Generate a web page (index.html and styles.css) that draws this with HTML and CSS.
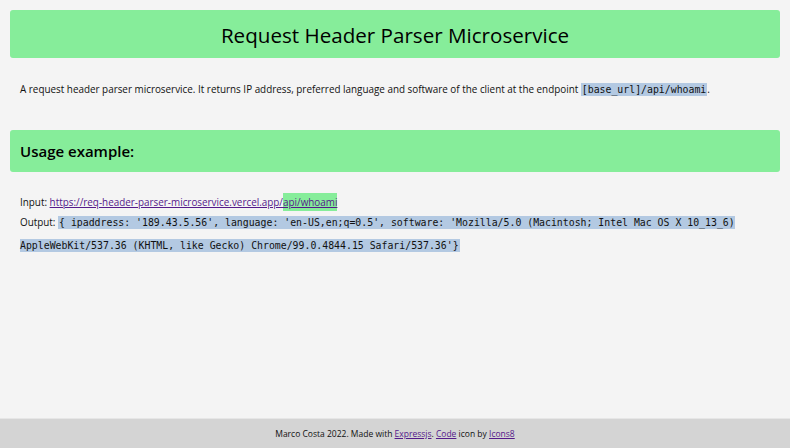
FILE: index.html
```html
<!DOCTYPE html>
<html lang="en">
<head>
<meta charset="utf-8">
<title>Request Header Parser Microservice</title>
<link rel="stylesheet" href="styles.css">
</head>
<body>
<div class="page">
  <header class="banner">
    <h1 class="title">Request Header Parser Microservice</h1>
  </header>
  <p class="intro">A request header parser microservice. It returns IP address, preferred language and software of the client at the endpoint <code class="code">[base_url]/api/whoami</code>.</p>
  <section class="usage">
    <div class="subbanner"><h2 class="subtitle">Usage example:</h2></div>
    <p class="line first">Input: <a class="link" href="#">https://req-header-parser-microservice.vercel.app/<span class="hl">api/whoami</span></a></p>
    <p class="line out">Output: <code class="code">{ ipaddress: '189.43.5.56', language: 'en-US,en;q=0.5', software: 'Mozilla/5.0 (Macintosh; Intel Mac OS X 10_13_6) AppleWebKit/537.36 (KHTML, like Gecko) Chrome/99.0.4844.15 Safari/537.36'}</code></p>
  </section>
</div>
<footer class="footer"><p class="credits">Marco Costa 2022. Made with <a class="link" href="#">Expressjs</a>. <a class="link" href="#">Code</a> icon by <a class="link" href="#">Icons8</a></p></footer>
</body>
</html>
```

FILE: styles.css
```css
html, body {
  margin: 0;
  padding: 0;
  height: 100%;
}
body {
  background: #f4f4f4;
  font-family: "Open Sans", "Liberation Sans", sans-serif;
  color: #111;
  display: flex;
  flex-direction: column;
}
.page {
  flex: 1;
  padding: 10px 10px 0;
}
.banner {
  background: #86ed9a;
  border-radius: 3px;
  height: 48px;
  display: flex;
  align-items: center;
  justify-content: center;
}
.title {
  margin: 0;
  font-size: 20.6px;
  font-weight: 400;
  color: #000;
  padding-top: 1px;
}
.intro {
  margin: 22px 10px 0;
  font-size: 9.9px;
  line-height: 18px;
}
.code {
  font-family: "DejaVu Sans Mono", monospace;
  font-size: 9.85px;
  background: #b3c9e2;
  padding: 1px 1px;
}
.usage {
  margin-top: 31px;
}
.subbanner {
  background: #86ed9a;
  border-radius: 3px;
  height: 42px;
  display: flex;
  align-items: center;
  padding: 0 10px;
}
.subtitle {
  margin: 0;
  font-size: 15px;
  font-weight: 600;
  color: #000;
}
.line {
  margin: 0 10px;
  font-size: 9.9px;
  line-height: 20px;
}
.first {
  margin-top: 20px;
}
.out {
  line-height: 23px;
  margin-top: -1px;
}
.link {
  color: #551a8b;
}
.hl {
  background: #86ed9a;
  padding: 2px 0;
}
.footer {
  background: #d4d4d4;
  border-top: 1px solid #e6e6e6;
  height: 29px;
  display: flex;
  align-items: center;
  justify-content: center;
}
.credits {
  margin: 0;
  font-size: 8.5px;
  color: #111;
}
```
